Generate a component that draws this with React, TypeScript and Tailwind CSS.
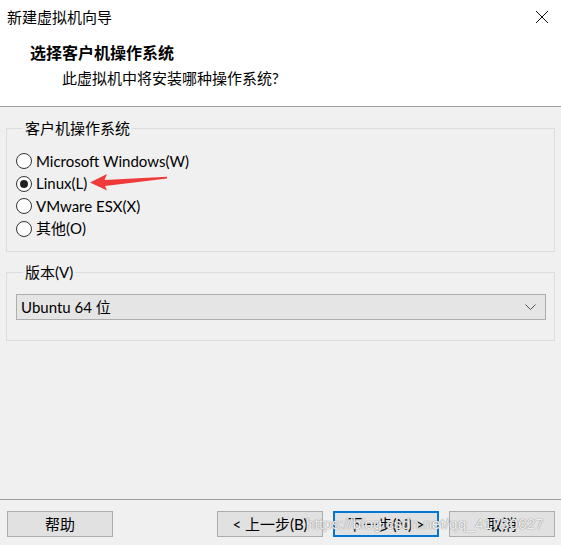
import React from "react";

const FONT = { fontFamily: 'Lato, "Noto Sans CJK SC", sans-serif' };

type RadioProps = { label: string; checked?: boolean };

const Radio: React.FC<RadioProps> = ({ label, checked }) => (
  <div className="flex items-center h-[22.5px]">
    <span className="w-[16px] h-[16px] rounded-full border border-[#333] bg-white flex items-center justify-center">
      {checked && <span className="w-[8px] h-[8px] rounded-full bg-[#222]" />}
    </span>
    <span className="ml-[4px] text-[15px] leading-none text-black">{label}</span>
  </div>
);

const Btn: React.FC<{ label: string; focus?: boolean }> = ({ label, focus }) => (
  <button
    className={
      focus
        ? "w-[106px] h-[26px] bg-[#e1e1e1] border-2 border-[#0078d7] text-[15px] text-black leading-none"
        : "w-[106px] h-[26px] bg-[#e1e1e1] border border-[#adadad] text-[15px] text-black leading-none"
    }
  >
    {label}
  </button>
);

export default function App() {
  return (
    <div className="relative w-[561px] h-[545px] bg-[#f0f0f0] flex flex-col overflow-hidden" style={FONT}>
      {/* header */}
      <div className="bg-white h-[107px] border-b border-[#a0a0a0] shrink-0">
        <div className="h-[34px] flex items-center justify-between pl-[7px] pr-[10px]">
          <span className="text-[15px] text-black">新建虚拟机向导</span>
          <svg width="14" height="14" viewBox="0 0 14 14" className="mr-[2px]">
            <path d="M1 1L13 13M13 1L1 13" stroke="#111" strokeWidth="1" fill="none" />
          </svg>
        </div>
        <div className="pl-[30px] mt-[8px] h-[22px] flex items-center text-[16px] font-bold text-black">
          选择客户机操作系统
        </div>
        <div className="pl-[62px] mt-[3px] h-[22px] flex items-center text-[15px] text-black">
          此虚拟机中将安装哪种操作系统?
        </div>
      </div>

      {/* body */}
      <div className="px-[6px] pt-[11px]">
        <fieldset className="border border-[#dcdcdc] w-[549px] h-[134px] pl-[9px] pt-[12px]">
          <legend className="ml-[7px] px-[2px] text-[15px] leading-[20px] text-black">客户机操作系统</legend>
          <Radio label="Microsoft Windows(W)" />
          <Radio label="Linux(L)" checked />
          <Radio label="VMware ESX(X)" />
          <Radio label="其他(O)" />
        </fieldset>

        <fieldset className="mt-[10px] border border-[#dcdcdc] w-[549px] h-[79px] pl-[9px] pr-[8px] pt-[12px]">
          <legend className="ml-[7px] px-[2px] text-[15px] leading-[20px] text-black">版本(V)</legend>
          <div className="h-[26px] bg-[#e5e5e5] border border-[#adadad] flex items-center justify-between pl-[4px] pr-[9px]">
            <span className="text-[15px] text-black">Ubuntu 64 位</span>
            <svg width="11" height="7" viewBox="0 0 11 7">
              <path d="M0.5 0.5L5.5 5.5L10.5 0.5" stroke="#555" strokeWidth="1" fill="none" />
            </svg>
          </div>
        </fieldset>
      </div>

      <div className="flex-1" />

      {/* footer */}
      <div className="border-t border-[#a0a0a0] h-[46px] shrink-0 flex items-start pt-[11px] px-[7px] justify-between">
        <Btn label="帮助" />
        <div className="flex gap-[10px] mr-[-1px]">
          <Btn label="< 上一步(B)" />
          <Btn label="下一步(N) >" focus />
          <Btn label="取消" />
        </div>
      </div>

      {/* red annotation arrow */}
      <svg className="absolute left-[88px] top-[170px]" width="84" height="24" viewBox="88 170 84 24">
        <polygon
          points="90,182.5 107,174 104.5,180 167,176.8 167,178.6 105,186 107,190.5"
          fill="#f03a3a"
        />
      </svg>

      {/* watermark */}
      <div
        className="absolute left-[306px] top-[512px] text-[15.5px] leading-[24px] text-white/85 whitespace-nowrap [text-shadow:0_0_1px_#8a8a8a,0_0_1px_#8a8a8a] pointer-events-none"
        style={{ fontFamily: '"Liberation Sans", Arial, sans-serif' }}
      >
        https://blog.csdn.net/qq_41730627
      </div>
    </div>
  );
}
